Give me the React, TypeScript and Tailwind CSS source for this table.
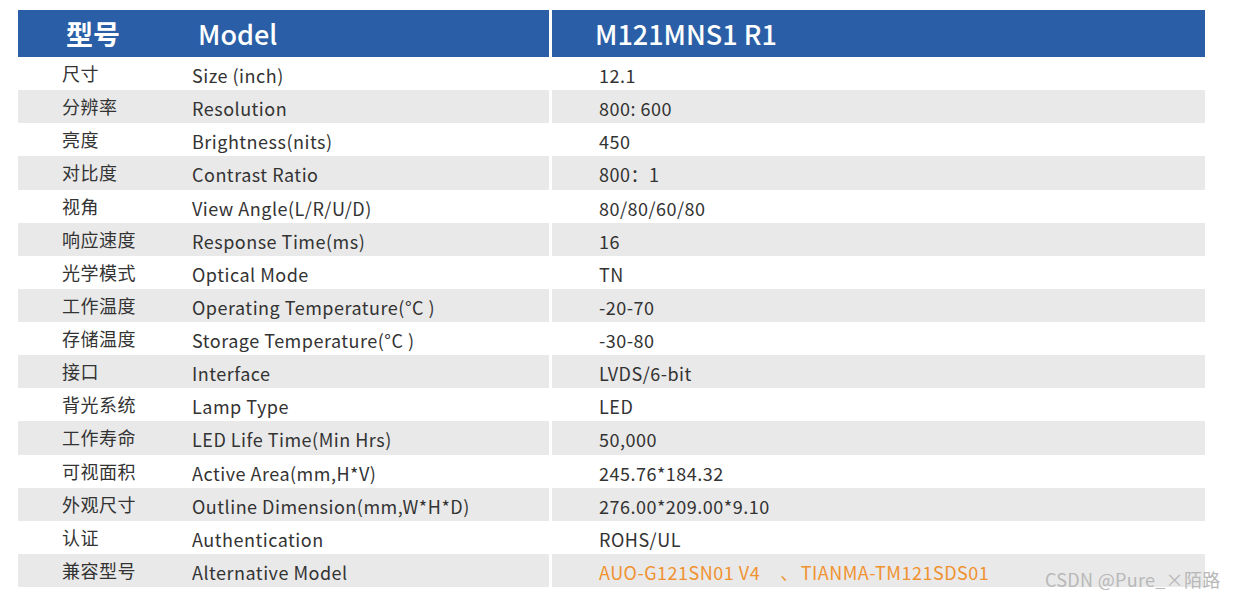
const rows: [string, string, string][] = [
  ["尺寸", "Size (inch)", "12.1"],
  ["分辨率", "Resolution", "800: 600"],
  ["亮度", "Brightness(nits)", "450"],
  ["对比度", "Contrast Ratio", "800：1"],
  ["视角", "View Angle(L/R/U/D)", "80/80/60/80"],
  ["响应速度", "Response Time(ms)", "16"],
  ["光学模式", "Optical Mode", "TN"],
  ["工作温度", "Operating Temperature(°C )", "-20-70"],
  ["存储温度", "Storage Temperature(°C )", "-30-80"],
  ["接口", "Interface", "LVDS/6-bit"],
  ["背光系统", "Lamp Type", "LED"],
  ["工作寿命", "LED Life Time(Min Hrs)", "50,000"],
  ["可视面积", "Active Area(mm,H*V)", "245.76*184.32"],
  ["外观尺寸", "Outline Dimension(mm,W*H*D)", "276.00*209.00*9.10"],
  ["认证", "Authentication", "ROHS/UL"],
];

export default function App() {
  return (
    <div
      className="relative w-[1237px] h-[601px] bg-white text-[#333333]"
      style={{ fontFamily: '"Noto Sans CJK SC", "Noto Sans", sans-serif' }}
    >
      <div className="pt-[10px] pl-[18px] w-[1205px]">
        {/* header */}
        <div className="flex h-[47px] gap-[3px]">
          <div className="w-[531px] bg-[#2a5fa7] flex items-center text-white font-bold text-[27px] pt-[2px]">
            <span className="pl-[48px] w-[180px]">型号</span>
            <span className="font-medium">Model</span>
          </div>
          <div className="flex-1 bg-[#2a5fa7] flex items-center text-white font-medium text-[27px] pl-[43px] pt-[2px]">
            M121MNS1 R1
          </div>
        </div>
        {rows.map(([zh, en, val], i) => (
          <div key={zh} className="flex h-[33.125px] gap-[3px] text-[18px] tracking-[0.5px]">
            <div className={`w-[531px] flex items-center ${i % 2 === 1 ? "bg-[#e9e9e9]" : "bg-white"}`}>
              <span className="pl-[44px] w-[174px]">{zh}</span>
              <span className="mt-[4px]">{en}</span>
            </div>
            <div className={`flex-1 flex items-center pl-[47px] pt-[4px] ${i % 2 === 1 ? "bg-[#e9e9e9]" : "bg-white"}`}>
              {val}
            </div>
          </div>
        ))}
        <div className="flex h-[33.125px] gap-[3px] text-[18px] tracking-[0.5px]">
          <div className="w-[531px] flex items-center bg-[#e9e9e9]">
            <span className="pl-[44px] w-[174px]">兼容型号</span>
            <span className="mt-[4px]">Alternative Model</span>
          </div>
          <div className="flex-1 flex items-center pl-[47px] pt-[4px] bg-[#e9e9e9] text-[#f0922f]">
            <span>AUO-G121SN01 V4</span>
            <span className="pl-[20px] pr-[2px]">、</span>
            <span>TIANMA-TM121SDS01</span>
          </div>
        </div>
      </div>
      <div className="absolute left-[1045px] top-[566px] text-[18px] tracking-[0.3px] text-[#b8b8b8]">
        CSDN @Pure_×陌路
      </div>
    </div>
  );
}
